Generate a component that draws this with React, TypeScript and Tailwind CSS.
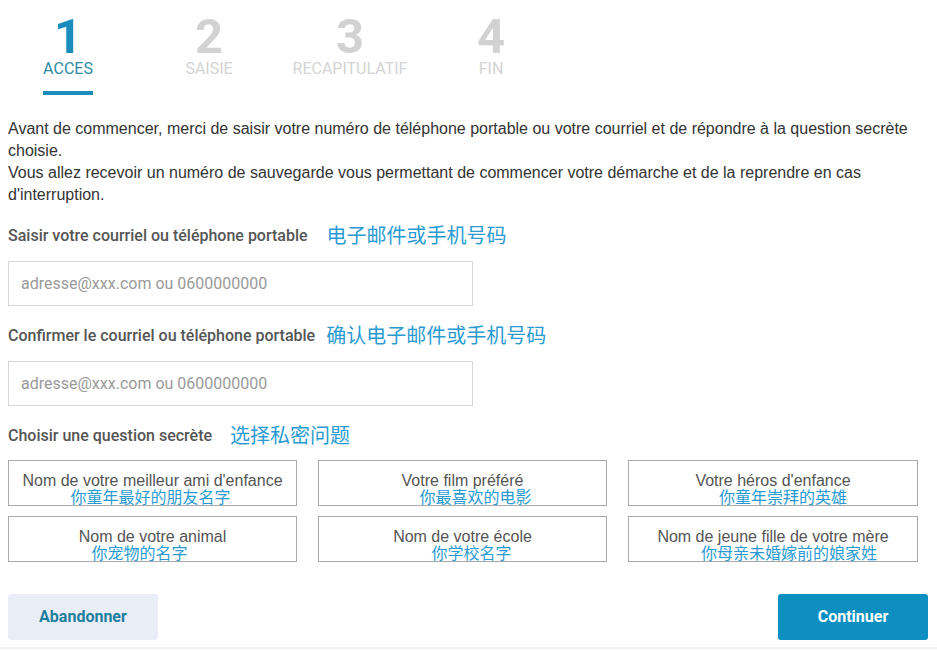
const steps = [
  { n: "1", label: "ACCES", active: true },
  { n: "2", label: "SAISIE", active: false },
  { n: "3", label: "RECAPITULATIF", active: false },
  { n: "4", label: "FIN", active: false },
];

const questions = [
  { fr: "Nom de votre meilleur ami d'enfance", zh: "你童年最好的朋友名字", shift: "-translate-x-[2px]" },
  { fr: "Votre film préféré", zh: "你最喜欢的电影", shift: "translate-x-[13px]" },
  { fr: "Votre héros d'enfance", zh: "你童年崇拜的英雄", shift: "translate-x-[10px]" },
  { fr: "Nom de votre animal", zh: "你宠物的名字", shift: "-translate-x-[13px]" },
  { fr: "Nom de votre école", zh: "你学校名字", shift: "translate-x-[9px]" },
  { fr: "Nom de jeune fille de votre mère", zh: "你母亲未婚嫁前的娘家姓", shift: "translate-x-[16px]" },
];

const zh = "font-['Liberation_Sans','Noto_Sans_CJK_SC',sans-serif]";

export default function App() {
  return (
    <div className="w-[937px] h-[651px] bg-white overflow-hidden font-['Liberation_Sans',sans-serif] text-[#333]">
      {/* steps */}
      <div className="flex gap-[5px] pt-[15px] font-['Roboto',sans-serif]">
        {steps.map((s) => (
          <div key={s.n} className="w-[136px] flex flex-col items-center">
            <div className={`text-[49px] leading-[44px] font-bold ${s.active ? "text-[#1a8dbd]" : "text-[#d2d2d2]"}`}>{s.n}</div>
            <div className={`text-[16px] leading-[18px] mt-[1px] ${s.active ? "text-[#2b8ca3] border-b-4 border-[#1a8dbd] pb-[13px]" : "text-[#d4d4d4]"}`}>{s.label}</div>
          </div>
        ))}
      </div>

      <div className="px-[8px]">
        <p className="mt-[23px] text-[16px] leading-[22px] text-[#333]">
          Avant de commencer, merci de saisir votre numéro de téléphone portable ou votre courriel et de répondre à la question secrète choisie.
          <br />
          Vous allez recevoir un numéro de sauvegarde vous permettant de commencer votre démarche et de la reprendre en cas d'interruption.
        </p>

        <div className="mt-[16px] flex items-center h-[28px]">
          <span className="font-['Roboto',sans-serif] font-medium text-[16px] text-[#555]">Saisir votre courriel ou téléphone portable</span>
          <span className={`${zh} ml-[19px] text-[20px] text-[#2a9bd2]`}>电子邮件或手机号码</span>
        </div>
        <div className="mt-[11px] w-[465px] h-[45px] border border-[#d6d6d6] flex items-center px-[12px] font-['Roboto',sans-serif] text-[16px] text-[#9a9a9a]">
          adresse@xxx.com ou 0600000000
        </div>

        <div className="mt-[16px] flex items-center h-[28px]">
          <span className="font-['Roboto',sans-serif] font-medium text-[16px] text-[#555]">Confirmer le courriel ou téléphone portable</span>
          <span className={`${zh} ml-[11px] text-[20px] text-[#2a9bd2]`}>确认电子邮件或手机号码</span>
        </div>
        <div className="mt-[11px] w-[465px] h-[45px] border border-[#d6d6d6] flex items-center px-[12px] font-['Roboto',sans-serif] text-[16px] text-[#9a9a9a]">
          adresse@xxx.com ou 0600000000
        </div>

        <div className="mt-[16px] flex items-center h-[28px]">
          <span className="font-['Roboto',sans-serif] font-medium text-[16px] text-[#555]">Choisir une question secrète</span>
          <span className={`${zh} ml-[18px] text-[20px] text-[#2a9bd2]`}>选择私密问题</span>
        </div>

        <div className="mt-[10px] grid grid-cols-[289px_289px_290px] gap-x-[21px] gap-y-[10px]">
          {questions.map((q) => (
            <div key={q.fr} className="h-[46px] border border-[#a9a9a9] flex flex-col items-center pt-[11px]">
              <span className="text-[16px] leading-[18px] text-[#555]">{q.fr}</span>
              <span className={`${zh} ${q.shift} text-[16px] leading-[16px] text-[#2a9bd2]`}>{q.zh}</span>
            </div>
          ))}
        </div>

        <div className="mt-[32px] flex justify-between pr-[1px]">
          <button className="w-[150px] h-[46px] rounded-[3px] bg-[#e9eef6] text-[#1e7e9e] font-['Roboto',sans-serif] font-bold text-[16px]">Abandonner</button>
          <button className="w-[150px] h-[46px] rounded-[3px] bg-[#0e8fc2] text-white font-['Roboto',sans-serif] font-bold text-[16px]">Continuer</button>
        </div>
      </div>
      <div className="mt-[7px] h-[2px] bg-[#f2f2f2]" />
    </div>
  );
}
